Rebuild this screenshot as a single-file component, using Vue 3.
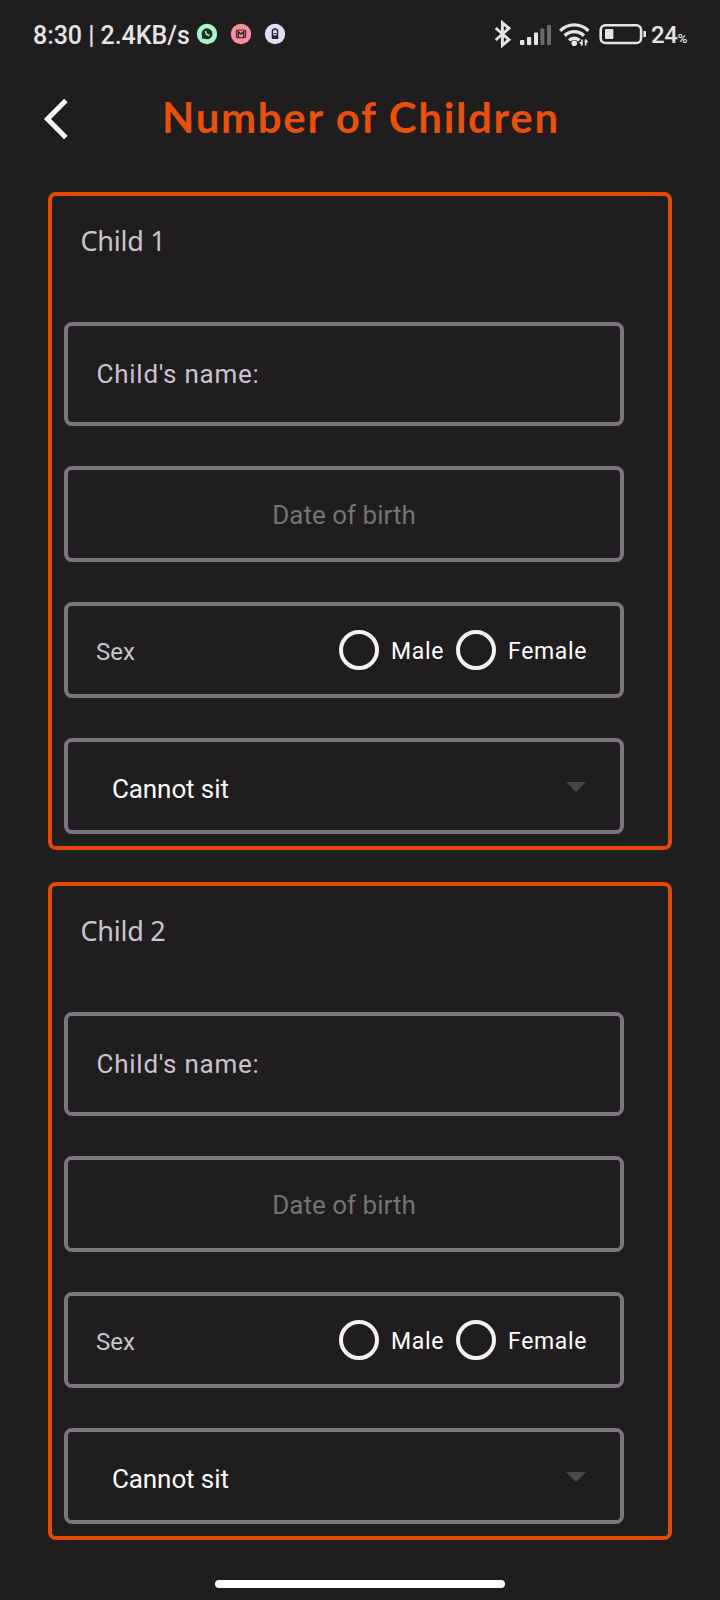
<script setup>
const children = [1, 2]
const sexes = ['Male', 'Female']
</script>

<template>
  <div class="screen">
    <header class="status">
      <span class="clock">8:30 | 2.4KB/s</span>
      <svg class="notes" width="90" height="24" viewBox="0 0 90 24">
        <circle cx="11" cy="12" r="10.2" fill="#a4f8c8" />
        <circle cx="11" cy="11.8" r="5.5" fill="#1f2b25" />
        <path d="M5.7 16.8l.6-3.6 3 3z" fill="#1f2b25" />
        <path d="M9.6 9c-.2 2.600 1.400 4.300 4 4.200" fill="none" stroke="#a4f8c8" stroke-width="1.500" />
        <circle cx="45" cy="12" r="10.2" fill="#ff8d9f" />
        <rect x="40.400" y="8" width="9.200" height="7.600" rx="1" fill="none" stroke="#4a2a34" stroke-width="1.200" />
        <path d="M42.300 15.400V9.700l2.700 2.300 2.700-2.300v5.700" fill="none" stroke="#32202a" stroke-width="1.500" />
        <circle cx="79" cy="12" r="10.2" fill="#dfe0fb" />
        <path d="M76.400 11V9.300a2.600 2.300 0 0 1 5.200 0V11" fill="none" stroke="#26262e" stroke-width="1.400" />
        <rect x="75.700" y="11" width="6.600" height="6" rx=".8" fill="#26262e" />
        <path d="M77.200 11.600l1.800 1.700 1.800-1.700" fill="none" stroke="#dfe0fb" stroke-width="1.100" />
      </svg>
      <svg class="system" width="154" height="28" viewBox="0 0 154 28">
        <path d="M2.7 8L16 19.700 9.400 25.300V2.700L16 8.300 2.700 20" fill="none" stroke="#e6e5e6" stroke-width="2.900" />
        <g fill="#e6e5e6">
          <rect x="27" y="20" width="4.400" height="5" rx=".8" />
          <rect x="34" y="17" width="4.200" height="8" rx=".8" />
          <rect x="41" y="12.600" width="4" height="12.400" rx=".8" />
        </g>
        <g fill="#6b696a">
          <rect x="47.400" y="8.600" width="4" height="16.400" rx=".8" />
          <rect x="54" y="5" width="4" height="20" rx=".8" />
        </g>
        <g fill="none" stroke="#e6e5e6" stroke-width="3.400">
          <path d="M67.200 10.900a19.600 19.600 0 0 1 28.200 0" />
          <path d="M71.700 15.700a13.300 13.300 0 0 1 19.200 0" />
          <path d="M76.100 20.400a7.400 7.400 0 0 1 10.400 0" />
        </g>
        <circle cx="81.300" cy="23.300" r="2.800" fill="#e6e5e6" />
        <path d="M88.900 25.400v-6M92.600 19.400v6" fill="none" stroke="#e6e5e6" stroke-width="1.700" />
        <path d="M86 22l2.900 4v-4zM95.400 22.600l-2.800-4v4z" fill="#e6e5e6" />
        <rect x="107.700" y="5.200" width="40.400" height="17.800" rx="4.800" fill="none" stroke="#e6e5e6" stroke-width="2.600" />
        <rect x="112" y="9" width="8.400" height="10" rx="1" fill="#e6e5e6" />
        <path d="M151.700 11v6" stroke="#e6e5e6" stroke-width="2.600" />
      </svg>
      <span class="percent">24<small>%</small></span>
    </header>

    <div class="bar">
      <svg class="back" width="26" height="42" viewBox="0 0 26 42">
        <path d="M22.900 2.600L4.500 21l18.400 18.400" fill="none" stroke="#fff" stroke-width="5" />
      </svg>
      <h1>Number of Children</h1>
    </div>

    <main>
      <section v-for="n in children" :key="n" class="card">
        <h2>Child {{ n }}</h2>
        <div class="field name">Child's name:</div>
        <div class="field date">Date of birth</div>
        <div class="field sex">
          <span class="label">Sex</span>
          <label v-for="s in sexes" :key="s" class="option"><i class="radio"></i><span>{{ s }}</span></label>
        </div>
        <div class="field ability">
          <span>Cannot sit</span>
          <svg width="20" height="10" viewBox="0 0 20 10"><path d="M0 0h20L10 10z" fill="#49464f" /></svg>
        </div>
      </section>
    </main>
    <div class="home"></div>
  </div>
</template>

<style>
body { background: #1f1d1e; }
</style>

<style scoped>
.screen {
  box-sizing: border-box;
  width: 720px;
  height: 1600px;
  display: flex;
  flex-direction: column;
  background: #1f1d1e;
  font-family: Roboto, sans-serif;
  overflow: hidden;
}
.status {
  display: flex;
  align-items: center;
  height: 70px;
  padding-left: 33px;
  color: #e6e5e6;
  white-space: nowrap;
}
.clock { width: 163px; font-size: 25px; font-weight: 500; letter-spacing: -.05px; }
.notes { margin-top: -2px; }
.system { margin-left: 207px; margin-top: -2px; }
.percent { margin-left: 4px; font-size: 24px; font-weight: 500; letter-spacing: -.4px; }
.percent small { font-size: 13.5px; }
.bar {
  display: flex;
  align-items: center;
  height: 98px;
  padding-left: 43px;
  margin-bottom: 24px;
}
h1 {
  margin: -4px 0 0 93px;
  font: 700 42px/60px Lato, sans-serif;
  letter-spacing: 1.67px;
  color: #e8500c;
  white-space: nowrap;
}
main { display: flex; flex-direction: column; gap: 32px; padding: 0 48px; }
.card {
  box-sizing: border-box;
  height: 658px;
  border: 4px solid #e24a05;
  border-radius: 8px;
  padding: 0 44px 12px 12px;
  display: flex;
  flex-direction: column;
  gap: 40px;
}
h2 {
  margin: 25px 0 21px;
  padding-left: 16.5px;
  font: 400 27px/40px "Noto Sans", sans-serif;
  letter-spacing: -.25px;
  color: #cac4d0;
}
.field {
  box-sizing: border-box;
  flex: none;
  height: 96px;
  border: 4px solid #79747e;
  border-radius: 8px;
  display: flex;
  align-items: center;
  font-size: 26px;
  white-space: nowrap;
}
.name { height: 104px; padding-left: 28.5px; color: #cac4d0; letter-spacing: .75px; }
.date { justify-content: center; color: #757475; padding-top: 1px; }
.sex { padding-left: 28px; color: #fff; font-size: 23px; }
.sex .label { flex: none; width: 243px; padding-top: 3px; font-size: 24px; color: #cac4d0; }
.option { flex: none; display: flex; align-items: center; width: 117px; letter-spacing: .65px; }
.option span { padding-top: 2px; }
.radio {
  box-sizing: border-box;
  flex: none;
  width: 40px;
  height: 40px;
  margin-right: 12px;
  border: 4px solid #f6f1f8;
  border-radius: 50%;
}
.option + .option { width: 133px; }
.ability { justify-content: space-between; padding: 0 34px 0 44px; color: #fff; }
.ability span { padding-top: 5px; letter-spacing: -.1px; }
.ability svg { margin-top: 2px; }
.home { width: 290px; height: 8px; margin: 40px auto 0; border-radius: 4px; background: #fff; }
</style>
